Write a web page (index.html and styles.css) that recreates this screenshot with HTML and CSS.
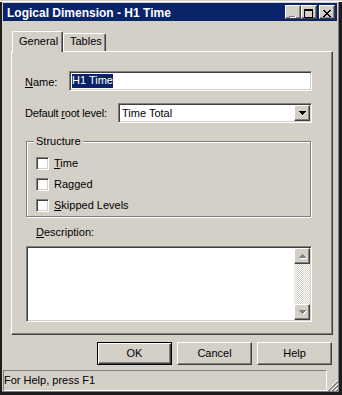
FILE: index.html
```html
<!DOCTYPE html>
<html>
<head>
<meta charset="utf-8">
<title>Logical Dimension - H1 Time</title>
<link rel="stylesheet" href="styles.css">
</head>
<body>
<div class="window">
  <div class="titlebar">
    <span class="title">Logical Dimension - H1 Time</span>
    <div class="caption-btns">
      <span class="cbtn"><svg width="14" height="12" shape-rendering="crispEdges"><rect x="4" y="11" width="6" height="1" fill="#fff"/><rect x="3" y="10" width="6" height="1" fill="#808080"/><rect x="9" y="10" width="1" height="1" fill="#fff"/></svg></span>
      <span class="cbtn cbtn-max"><svg width="14" height="12" shape-rendering="crispEdges"><rect x="2" y="3" width="9" height="2" fill="#000"/><rect x="2" y="3" width="1" height="9" fill="#000"/><rect x="10" y="3" width="1" height="9" fill="#000"/><rect x="2" y="11" width="9" height="1" fill="#000"/></svg></span>
      <span class="cbtn cbtn-close"><svg width="14" height="12" shape-rendering="crispEdges"><g fill="#000"><rect x="3" y="4" width="2" height="1"/><rect x="9" y="4" width="2" height="1"/><rect x="4" y="5" width="2" height="1"/><rect x="8" y="5" width="2" height="1"/><rect x="5" y="6" width="4" height="1"/><rect x="6" y="7" width="2" height="1"/><rect x="5" y="8" width="4" height="1"/><rect x="4" y="9" width="2" height="1"/><rect x="8" y="9" width="2" height="1"/><rect x="3" y="10" width="2" height="1"/><rect x="9" y="10" width="2" height="1"/></g></svg></span>
    </div>
  </div>

  <div class="tabs">
    <div class="tab tab-active tab-general">General</div>
    <div class="tab tab-tables">Tables</div>
  </div>

  <div class="panel">
    <div class="row row-name">
      <span class="lbl lbl-name"><u>N</u>ame:</span>
      <div class="sunken edit"><span class="sel">H1 Time</span></div>
    </div>
    <div class="row row-root">
      <span class="lbl lbl-root">Default <u>r</u>oot level:</span>
      <div class="sunken combo">
        <span class="combo-text">Time Total</span>
        <span class="raised dd-btn"><svg width="14" height="14" shape-rendering="crispEdges"><g fill="#000"><rect x="4" y="5" width="7" height="1"/><rect x="5" y="6" width="5" height="1"/><rect x="6" y="7" width="3" height="1"/><rect x="7" y="8" width="1" height="1"/></g></svg></span>
      </div>
    </div>

    <div class="group">
      <div class="legend">Structure</div>
      <div class="checks">
        <div class="check"><span class="box"></span><span class="check-lbl"><u>T</u>ime</span></div>
        <div class="check"><span class="box"></span><span class="check-lbl">Ragged</span></div>
        <div class="check"><span class="box"></span><span class="check-lbl"><u>S</u>kipped Levels</span></div>
      </div>
    </div>

    <div class="lbl desc-lbl"><u>D</u>escription:</div>
    <div class="sunken memo">
      <div class="vscroll">
        <span class="raised sbtn"><svg width="14" height="14" shape-rendering="crispEdges"><g fill="#fff"><rect x="8" y="6" width="1" height="1"/><rect x="7" y="7" width="3" height="1"/><rect x="6" y="8" width="5" height="1"/><rect x="5" y="9" width="7" height="1"/></g><g fill="#808080"><rect x="7" y="5" width="1" height="1"/><rect x="6" y="6" width="3" height="1"/><rect x="5" y="7" width="5" height="1"/><rect x="4" y="8" width="7" height="1"/></g></svg></span>
        <span class="track"></span>
        <span class="raised sbtn"><svg width="14" height="14" shape-rendering="crispEdges"><g fill="#fff"><rect x="5" y="6" width="7" height="1"/><rect x="6" y="7" width="5" height="1"/><rect x="7" y="8" width="3" height="1"/><rect x="8" y="9" width="1" height="1"/></g><g fill="#808080"><rect x="4" y="5" width="7" height="1"/><rect x="5" y="6" width="5" height="1"/><rect x="6" y="7" width="3" height="1"/><rect x="7" y="8" width="1" height="1"/></g></svg></span>
      </div>
    </div>
  </div>

  <div class="buttons">
    <div class="btn btn-default">OK</div>
    <div class="btn">Cancel</div>
    <div class="btn">Help</div>
  </div>

  <div class="statusbar">
    <div class="pane">For Help, press F1</div>
    <svg class="grip" width="11" height="11" shape-rendering="crispEdges">
      <g stroke-width="1">
        <line x1="0" y1="11" x2="11" y2="0" stroke="#fff"/>
        <line x1="1" y1="11" x2="11" y2="1" stroke="#808080"/>
        <line x1="2" y1="11" x2="11" y2="2" stroke="#808080"/>
        <line x1="4" y1="11" x2="11" y2="4" stroke="#fff"/>
        <line x1="5" y1="11" x2="11" y2="5" stroke="#808080"/>
        <line x1="6" y1="11" x2="11" y2="6" stroke="#808080"/>
        <line x1="8" y1="11" x2="11" y2="8" stroke="#fff"/>
        <line x1="9" y1="11" x2="11" y2="9" stroke="#808080"/>
        <line x1="10" y1="11" x2="11" y2="10" stroke="#808080"/>
      </g>
    </svg>
  </div>
</div>
</body>
</html>
```

FILE: styles.css
```css
* { box-sizing: border-box; }
html, body { margin: 0; padding: 0; }
body {
  width: 342px;
  height: 395px;
  overflow: hidden;
  background: #d4d0c8;
  font-family: "Liberation Sans", Arial, sans-serif;
  font-size: 11px;
  color: #000;
}
u { text-decoration: underline; text-underline-offset: 1px; }

.window {
  width: 342px;
  height: 395px;
  padding: 3px 5px 4px 3px;
  display: flex;
  flex-direction: column;
  background: #d4d0c8;
  box-shadow:
    inset 0 1px 0 #d4d0c8,
    inset 0 2px 0 #ffffff,
    inset 2px 0 0 #1c1c1c,
    inset -3px 0 0 #1c1c1c,
    inset 0 -3px 0 #1c1c1c,
    inset -4px -4px 0 #808080;
}

/* title bar */
.titlebar {
  height: 18px;
  flex: none;
  background: #0a246a;
  display: flex;
  align-items: flex-start;
}
.title {
  color: #fff;
  font-weight: bold;
  font-size: 12px;
  line-height: 14px;
  padding: 3px 0 0 4px;
  white-space: nowrap;
}
.caption-btns {
  margin-left: auto;
  margin-top: 2px;
  display: flex;
}
.cbtn {
  width: 16px;
  height: 14px;
  background: #d4d0c8;
  border: 1px solid;
  border-color: #fff #404040 #404040 #fff;
  box-shadow: inset -1px -1px 0 #808080;
  display: block;
}
.cbtn svg { display: block; }
.cbtn-max { margin-right: 2px; }
.cbtn-close { margin-right: 2px; }

/* tabs */
.tabs {
  margin: 10px 0 0 9px;
  height: 20px;
  flex: none;
  display: flex;
  align-items: flex-end;
  position: relative;
  z-index: 1;
}
.tab {
  height: 18px;
  background: #d4d0c8;
  border-top: 1px solid #fff;
  border-left: 1px solid #fff;
  border-right: 1px solid #404040;
  border-radius: 2px 2px 0 0;
  box-shadow: inset -1px 0 0 #808080;
  line-height: 13px;
  padding: 1px 0 0 6px;
  white-space: nowrap;
}
.tab-active {
  height: 21px;
  margin-bottom: -1px;
  padding-top: 3px;
}
.tab-general { width: 51px; }
.tab-tables { width: 43px; }

/* panel */
.panel {
  margin-left: 8px;
  width: 322px;
  height: 284px;
  flex: none;
  border: 1px solid;
  border-color: #fff #404040 #404040 #fff;
  box-shadow: inset -1px -1px 0 #808080;
  display: flex;
  flex-direction: column;
}
.row {
  display: flex;
  align-items: flex-start;
  height: 20px;
  flex: none;
}
.row-name { margin-top: 19px; }
.row-root { margin-top: 12px; }
.lbl { line-height: 13px; white-space: nowrap; }
.lbl-name { margin: 5px 0 0 13px; width: 44px; }
.lbl-root { margin: 4px 0 0 13px; width: 93px; letter-spacing: -0.2px; }

.sunken {
  background: #fff;
  border: 1px solid;
  border-color: #808080 #fff #fff #808080;
  box-shadow: inset 1px 1px 0 #404040, inset -1px -1px 0 #d4d0c8;
  padding: 1px;
}
.edit { width: 243px; height: 20px; }
.sel {
  display: inline-block;
  margin-left: 1px;
  margin-top: 1px;
  background: #0a246a;
  color: #fff;
  line-height: 13px;
  height: 14px;
}
.combo {
  width: 194px;
  height: 20px;
  display: flex;
  align-items: flex-start;
}
.combo-text {
  line-height: 16px;
  padding-left: 2px;
}
.raised {
  background: #d4d0c8;
  border: 1px solid;
  border-color: #fff #404040 #404040 #fff;
  box-shadow: inset -1px -1px 0 #808080;
  display: block;
}
.raised svg { display: block; }
.dd-btn {
  margin-left: auto;
  width: 16px;
  height: 16px;
}

/* group box */
.group {
  margin: 18px 0 0 14px;
  width: 285px;
  height: 76px;
  flex: none;
  border: 1px solid #808080;
  box-shadow: 1px 1px 0 #fff, inset 1px 1px 0 #fff;
  padding-left: 9px;
}
.legend {
  margin: -7px 0 0 -2px;
  width: fit-content;
  padding: 0 2px;
  background: #d4d0c8;
  line-height: 13px;
}
.checks { margin-top: 5px; }
.check {
  height: 21px;
  display: flex;
  align-items: center;
}
.box {
  width: 13px;
  height: 13px;
  background: #fff;
  border: 1px solid;
  border-color: #808080 #fff #fff #808080;
  box-shadow: inset 1px 1px 0 #404040, inset -1px -1px 0 #d4d0c8;
}
.check-lbl { margin-left: 5px; line-height: 13px; }

.desc-lbl { margin: 9px 0 0 24px; }
.memo {
  margin: 7px 0 0 14px;
  width: 286px;
  height: 76px;
  flex: none;
  display: flex;
  justify-content: flex-end;
}
.vscroll {
  width: 16px;
  height: 72px;
  display: flex;
  flex-direction: column;
}
.sbtn { width: 16px; height: 16px; flex: none; }
.track {
  flex: 1;
  background-color: #fff;
  background-image: repeating-conic-gradient(#d4d0c8 0 25%, #fff 0 50%);
  background-size: 2px 2px;
}

/* buttons */
.buttons {
  margin-top: 7px;
  height: 23px;
  flex: none;
  display: flex;
  justify-content: flex-end;
  gap: 5px;
  padding-right: 5px;
}
.btn {
  width: 75px;
  height: 23px;
  background: #d4d0c8;
  border: 1px solid;
  border-color: #fff #404040 #404040 #fff;
  box-shadow: inset -1px -1px 0 #808080;
  text-align: center;
  line-height: 13px;
  padding-top: 4px;
}
.btn-default {
  border: 1px solid #000;
  box-shadow: inset 1px 1px 0 #fff, inset -1px -1px 0 #404040, inset -2px -2px 0 #808080;
}

/* status bar */
.statusbar {
  margin-top: 5px;
  height: 21px;
  flex: none;
  display: flex;
  align-items: flex-end;
}
.pane {
  width: 324px;
  height: 21px;
  border: 1px solid;
  border-color: #808080 #fff #fff #808080;
  line-height: 13px;
  padding: 3px 0 0 0;
  white-space: nowrap;
}
.grip {
  display: block;
  margin-left: auto;
  margin-right: -1px;
}
```
